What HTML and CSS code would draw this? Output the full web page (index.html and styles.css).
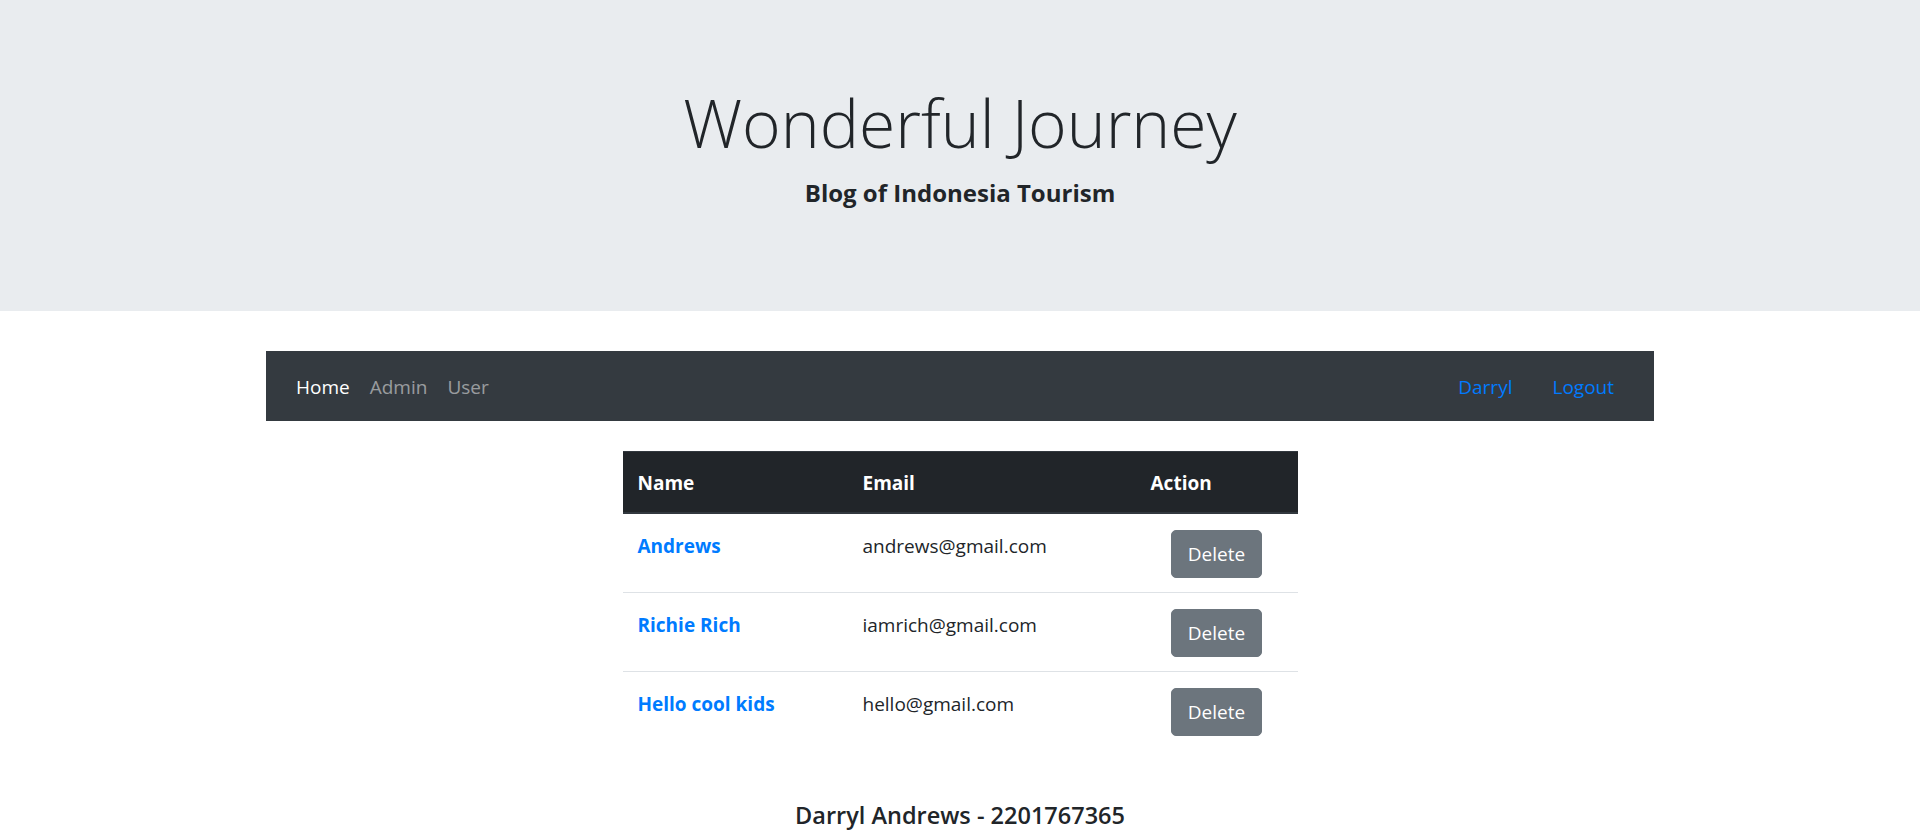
FILE: index.html
```html
<!DOCTYPE html>
<html lang="en">
<head>
<meta charset="utf-8">
<title>Wonderful Journey</title>
<link rel="stylesheet" href="styles.css">
</head>
<body>
<header class="jumbotron">
  <h1 class="display-title">Wonderful Journey</h1>
  <h5 class="subtitle">Blog of Indonesia Tourism</h5>
</header>

<nav class="navbar">
  <ul class="nav-left">
    <li><a class="nav-link active" href="#">Home</a></li>
    <li><a class="nav-link" href="#">Admin</a></li>
    <li><a class="nav-link" href="#">User</a></li>
  </ul>
  <ul class="nav-right">
    <li><a class="nav-link-blue" href="#">Darryl</a></li>
    <li><a class="nav-link-blue" href="#">Logout</a></li>
  </ul>
</nav>

<table class="users">
  <thead>
    <tr>
      <th class="col-name">Name</th>
      <th class="col-email">Email</th>
      <th class="col-action">Action</th>
    </tr>
  </thead>
  <tbody>
    <tr>
      <td><a class="user-link" href="#">Andrews</a></td>
      <td>andrews@gmail.com</td>
      <td class="action"><button class="btn-delete">Delete</button></td>
    </tr>
    <tr>
      <td><a class="user-link" href="#">Richie Rich</a></td>
      <td>iamrich@gmail.com</td>
      <td class="action"><button class="btn-delete">Delete</button></td>
    </tr>
    <tr>
      <td><a class="user-link" href="#">Hello cool kids</a></td>
      <td>hello@gmail.com</td>
      <td class="action"><button class="btn-delete">Delete</button></td>
    </tr>
  </tbody>
</table>

<footer class="footer">
  <h5 class="footer-text">Darryl Andrews - 2201767365</h5>
</footer>
</body>
</html>
```

FILE: styles.css
```css
* { box-sizing: border-box; }

body {
  margin: 0;
  font-family: "Open Sans", "Noto Sans", sans-serif;
  font-size: 19px;
  line-height: 30px;
  color: #212529;
  background: #fff;
}

a { text-decoration: none; }

.jumbotron {
  background: #e9ecef;
  padding: 80px 40px 93px;
  margin: 0 0 40px;
  text-align: center;
}

.display-title {
  margin: 0 0 14px;
  font-size: 66px;
  font-weight: 300;
  line-height: 84px;
  color: #212529;
}

.subtitle {
  margin: 0 0 10px;
  font-size: 24px;
  font-weight: 700;
  line-height: 30px;
}

.navbar {
  width: 1388px;
  margin: 0 auto;
  background: #343a40;
  padding: 11px 20px 9px;
  display: flex;
  justify-content: space-between;
  align-items: center;
}

.nav-left, .nav-right {
  list-style: none;
  margin: 0;
  padding: 0;
  display: flex;
}

.nav-link {
  display: block;
  padding: 10px 10px;
  color: rgba(255, 255, 255, 0.5);
}

.nav-link.active { color: #fff; }

.nav-link-blue {
  display: block;
  padding: 10px 20px;
  color: #007bff;
}

.users {
  width: 675px;
  margin: 30px auto 20px;
  border-collapse: separate;
  border-spacing: 0;
}

.users th {
  background: #212529;
  color: #fff;
  text-align: left;
  font-weight: 700;
  padding: 16px 15px 14px;
  border-top: 1px solid #32383e;
  border-bottom: 2px solid #32383e;
}

.col-name { width: 225px; }
.col-email { width: 288px; }
.col-action { width: 162px; }

.users td {
  padding: 17px 15px 15px;
  vertical-align: top;
}

.users td.action {
  text-align: center;
  padding-top: 16px;
  padding-bottom: 14px;
}

.users tbody tr + tr td {
  border-top: 1px solid #dee2e6;
}

.user-link {
  color: #007bff;
  font-weight: 700;
}

.btn-delete {
  font-family: inherit;
  font-size: 19px;
  line-height: 30px;
  color: #fff;
  background: #6c757d;
  border: 1px solid #6c757d;
  border-radius: 5px;
  padding: 8px 16px;
  cursor: pointer;
}

.footer {
  text-align: center;
  padding-top: 30px;
}

.footer-text {
  margin: 0;
  font-size: 23.5px;
  font-weight: 600;
  line-height: 30px;
}
```
